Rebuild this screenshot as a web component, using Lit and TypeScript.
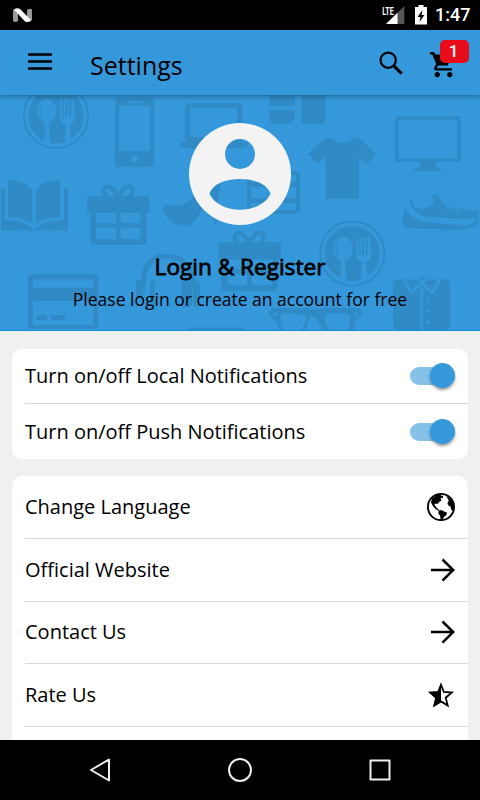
import { LitElement, html, css, svg } from "lit";
import { customElement, property } from "lit/decorators.js";

const arrow = svg`<path d="M4 14H26M15.5 3.5L26.2 14L15.5 24.7" fill="none" stroke="#000" stroke-width="2.5"/>`;

const globe = svg`
  <circle cx="14" cy="14" r="13.1" fill="none" stroke="#000" stroke-width="1.8"/>
  <path d="M5 5.5L9.5 2L14.5 1.2L14 3.2L16.2 2.5L15.8 5L13.4 5.3L14.5 7.5L12 9L10.5 11L8.2 10.6L7.4 12L8.8 13.2L10 15.2L12.5 17.2L11.8 18L8.2 15.8L5.6 12.5L4 9.5Z"/>
  <path d="M11.6 17.8L14.5 17.1L17 18.6L20 19.6L19.3 22.2L17.2 23.8L15.2 27H13.6L13.2 23L11.4 20.5Z"/>
  <path d="M19.2 3L22 4.4L25.8 8.5L27.3 13.5L26.4 18L24.3 17L23.6 13.8L21.6 12.8L20.4 10L21.8 7.6L20.8 5.8Z"/>`;

const star = svg`
  <path d="M14 3.8L16.8 11L24.8 11.6L18.7 16.7L20.7 24.6L14 20.4L7.3 24.6L9.3 16.7L3.2 11.6L11.2 11Z" fill="none" stroke="#000" stroke-width="1.8"/>
  <path d="M14 2.5V21L6.4 25.6L8.2 17L2.2 11.5L10.5 10.8Z"/>`;

const plate = (x: number, y: number) => svg`
  <g transform="translate(${x} ${y})">
    <circle r="32" fill="none" stroke="#2f8ac6" stroke-width="2"/>
    <circle r="27.6"/>
    <g fill="#3498db">
      <ellipse cx="-9.3" cy="-5" rx="9.8" ry="11.7"/>
      <path d="M-11 5H-7.5L-6 27L-12 25Z"/>
      <path d="M4.5 -17L6 -17.5L6.6 2H8V-17H9.7V2H11.5V-17H13.3V2H15L15.6 -17L17.5 -17L19 0Q19 7 13.5 9L15 24L8.5 27L10 9Q4 7 4 1Z"/>
    </g>
    <path d="M-15 -11Q-18 -4 -13.5 2" fill="none" stroke="#2f8ac6" stroke-width="1.2"/>
  </g>`;

const gift = (x: number, y: number) => svg`
  <g transform="translate(${x} ${y})">
    <rect width="62.5" height="17" rx="2"/>
    <path fill-rule="evenodd" d="M3 16H59.5V45Q59.5 49 55.5 49H7Q3 49 3 45ZM9 17V27H29V17ZM33.5 17V27H53.5V17ZM9 31.5V43H29V31.5ZM33.5 31.5V43H53.5V31.5Z"/>
    <path d="M30 0C25 -12 16 -12 16.5 -4Q17 -1 21 1M32 0C37 -12 46 -12 45.5 -4Q45 -1 41 1" fill="none" stroke="#2f8ac6" stroke-width="4"/>
  </g>`;

@customElement("shop-pattern")
class ShopPattern extends LitElement {
  static styles = css`
    :host { display: block; height: 100%; }
    .art { display: block; width: 480px; height: 236px; fill: #2f8ac6; }
  `;
  render() {
    return html`<svg class="art" viewBox="0 95 480 236">
      ${plate(56, 116)} ${plate(352.3, 253.6)} ${gift(87, 196)} ${gift(218.3, 242.3)}
      <path fill-rule="evenodd" d="M119 97.7H150Q154 97.7 154 101.7V163Q154 167 150 167H119Q115 167 115 163V101.7Q115 97.7 119 97.7ZM119 106V150.7H150V106ZM127 101V103H142.3V101ZM131 159A3.6 3.6 0 1 0 138.2 159A3.6 3.6 0 1 0 131 159Z"/>
      <path d="M8 181Q8 179.7 10 179.7Q26 181 32.3 190V224Q27 218.5 8 217ZM60 181Q60 179.7 58 179.7Q42 181 36 190V224Q41 218.5 60 217ZM1 189Q1 188 2.5 188H5V220Q28 221 32.5 229.5H35.5Q40 221 64 220V188H66.5Q68 188 68 189.5V231Q50 229 37 230.5H31Q18 229 1 231Z"/>
      <rect x="187.7" y="105.5" width="52" height="34" rx="1.5" fill="none" stroke="#2f8ac6" stroke-width="5"/>
      <path d="M180 142H248Q247 148.5 241 148.5H187Q181 148.5 180 142ZM269 92H295V105.7H269ZM269 110H295V116Q295 124 287 124H277Q269 124 269 116ZM301.5 92H325.3V121Q325.3 124 322.3 124H304.5Q301.5 124 301.5 121Z"/>
      <path d="M308 154L326 137.8H331Q342.5 148.5 354 137.8H359L376 154.5L366.8 164L359 156.5V199H325.8V156.5L317.5 164Z"/>
      <rect x="396.6" y="117.7" width="62.5" height="42.5" rx="2" fill="none" stroke="#2f8ac6" stroke-width="3.6"/>
      <path d="M420 161H436V167.5H439Q441.5 168 441.5 171H414Q414 168 417 167.5H420Z"/>
      <path fill-rule="evenodd" d="M252 171H295Q300 171 300 176V209Q300 214 295 214H252Q247 214 247 209V176Q247 171 252 171ZM251 175V182H296V175ZM251 187V198H271V187ZM276 187V198H296V187ZM251 203V210H296V203Z"/>
      <path d="M163 210Q164 203 174 205Q184 207 194 196Q206 185 218 170Q224 178 219 192L216 225H214L213 196L200 213Q193 228 181 225Q169 224 163 210Z"/>
      <path d="M405 206Q410 220 425 222L467 226Q479 222 478 215Q480 208 476 211L451 208L442 203Q437 191 432 195L434 203Q431 209 418 209Q412 207 413 201Q409 197 410 204Q414 213 426 217L465 219Q475 217 478 219Q480 223 474 227Q459 232 436 229Q415 229 406 228Q402 225 403 217Z"/>
      <path d="M445 201L448 211M451 203L453 212M457 205L458 213" stroke="#3498db" stroke-width="1.5"/>
      <path fill-rule="evenodd" d="M32 274H94Q98 274 98 278V325Q98 329 94 329H32Q28 329 28 325V278Q28 274 32 274ZM33 279V287.7H93V279ZM33 301V325H93V301Z"/>
      <path d="M37 315H47V320H37ZM51 315H65V320H51Z"/>
      <path d="M143 291V284C144 262 154 256 166 256C181 256 193 265 193 288" fill="none" stroke="#2f8ac6" stroke-width="5"/>
      <rect x="136" y="280" width="7" height="19" rx="3"/><rect x="150" y="281" width="5" height="26" rx="2.5"/>
      <rect x="181" y="281" width="11" height="26" rx="4"/><rect x="193" y="281" width="7" height="26" rx="3"/>
      <path fill-rule="evenodd" d="M272 308H307Q315 311 324 308H358Q362 309 362 314Q358 320 355 321L354 331H323L316 318Q313 316 310 318L305 331H280L275 320Q268 317 269 311ZM281 314Q279 321 284 331H300Q307 324 306 316Q296 312 281 314ZM326 314Q322 321 330 331H347Q352 322 350 315Q337 312 326 314Z"/>
      <circle cx="275" cy="314" r="2" fill="#3498db"/><circle cx="356" cy="314" r="2" fill="#3498db"/>
      <path d="M185 331Q188 327.5 194 327.5H238Q244 328 248 331Z"/>
      <rect x="393" y="279.5" width="57" height="50.5" rx="5"/>
      <path d="M414 277H430L422 287Z"/>
      <path d="M404 280L411 292.5L428 277.5M439.5 280L432.5 292.5L415.5 277.5" fill="none" stroke="#3498db" stroke-width="3"/>
      <path d="M421.8 288V331" stroke="#3498db" stroke-width="3"/>
      <g fill="#3498db"><circle cx="428" cy="301" r="1.7"/><circle cx="428" cy="311.5" r="1.7"/><circle cx="428" cy="322" r="1.7"/></g>
    </svg>`;
  }
}

@customElement("setting-row")
class SettingRow extends LitElement {
  @property() label = "";
  @property() kind = "arrow";
  static styles = css`
    :host { display: block; }
    .row { box-sizing: border-box; height: 100%; display: flex; align-items: center; justify-content: space-between; padding-right: 13px; }
    .label { font: 400 20px/28px "Open Sans", sans-serif; color: #000; white-space: nowrap; }
    .icon { width: 28px; height: 28px; display: block; overflow: visible; }
    .track { width: 45px; height: 18px; position: relative; background: linear-gradient(#85c1e9, #85c1e9) no-repeat 0 0 / 40px 18px; border-radius: 9px; }
    .knob { position: absolute; right: 0; top: -4px; width: 25px; height: 25px; border-radius: 50%; background: #3498db; box-shadow: 0 2px 3px rgba(0,0,0,.4); }
  `;
  render() {
    const icon = this.kind === "globe" ? globe : this.kind === "star" ? star : arrow;
    return html`<div class="row"><span class="label">${this.label}</span>
      ${this.kind === "toggle"
        ? html`<div class="track"><div class="knob"></div></div>`
        : this.kind === "none" ? "" : html`<svg class="icon" viewBox="0 0 28 28">${icon}</svg>`}
    </div>`;
  }
}

@customElement("app-root")
class AppRoot extends LitElement {
  static styles = css`
    :host { display: flex; flex-direction: column; width: 480px; height: 800px; overflow: hidden; background: #f0f0f0; font-family: "Open Sans", sans-serif; color: #000; }
    svg { display: block; }
    .status { flex: none; height: 30px; background: #000; color: #fff; display: flex; align-items: center; padding: 0 10px 0 13px; box-sizing: border-box; }
    .signal { margin-left: auto; }
    .battery { margin-left: 10px; }
    .time { font: 500 18px/30px Roboto, sans-serif; margin-left: 8px; width: 35px; white-space: nowrap; }
    .bar { flex: none; height: 65px; background: #3498db; display: flex; align-items: center; box-sizing: border-box; padding: 0 11px 0 28px; position: relative; z-index: 2; box-shadow: 0 1px 5px rgba(0,0,0,.4); }
    .menu { margin-top: -3px; }
    .title { font-size: 25px; line-height: 34px; margin: 5px auto 0 38px; }
    .search { margin-top: 2px; }
    .cart { position: relative; width: 39px; height: 45px; margin-left: 26px; }
    .cart svg { padding-top: 12px; }
    .badge { position: absolute; left: 10px; top: 0; width: 29px; height: 23px; border-radius: 5px; background: #e90d1b; color: #fff; font: 500 17px/22px Roboto, sans-serif; text-align: center; text-indent: -2px; }
    .hero { flex: none; height: 236px; background: #3498db; position: relative; overflow: hidden; border-bottom: 1px solid #0795e5; box-sizing: border-box; }
    .front { position: absolute; inset: 0; display: flex; flex-direction: column; align-items: center; padding-top: 28px; }
    .name { font-size: 22.6px; line-height: 30px; margin-top: 27px; -webkit-text-stroke: 0.8px #000; white-space: nowrap; }
    .hint { font-size: 17.5px; line-height: 24px; margin-top: 5px; white-space: nowrap; }
    .content { flex: 1; min-height: 0; overflow: hidden; padding: 18px 12px 0; display: flex; flex-direction: column; gap: 17px; }
    .card { flex: none; background: #fff; border-radius: 10px; padding-left: 13px; }
    .card setting-row { box-sizing: border-box; }
    .card setting-row + setting-row { border-top: 1px solid #d9d9d9; }
    .toggles setting-row { height: 54px; }
    .toggles setting-row + setting-row { height: 56px; }
    .links setting-row { height: 62.5px; }
    .links setting-row:first-child { height: 62px; }
    .nav { flex: none; height: 60px; background: #000; }
  `;
  render() {
    return html`
      <div class="status">
        <svg width="19" height="15" viewBox="0 0 19 15"><path d="M0 2Q2 .5 5 1V13Q2 15 0 13ZM14 2Q17 0 19 1.5V12Q17 15 14 13Z" fill="#999"/><path d="M1 1.5Q4 -.5 7 1L18 12Q16 15 12 13.5Z" fill="#fff"/></svg>
        <svg class="signal" width="23" height="20" viewBox="0 0 23 20"><path d="M22.3 1V19H4Z" fill="#555"/><path d="M15.5 7.7V19H4Z" fill="#fff"/><text x=".2" y="9.5" font-family="Roboto" font-weight="700" font-size="11" textLength="11.5" lengthAdjust="spacingAndGlyphs" fill="#fff">LTE</text></svg>
        <svg class="battery" width="12" height="20" viewBox="0 0 12 20"><path d="M3.5 0H8.5V2H12V19.5H0V2H3.5Z" fill="#fff"/><path d="M7.5 5L2.5 12H5.4L4.5 17L9.5 10H6.6Z"/></svg>
        <span class="time">1:47</span>
      </div>
      <div class="bar">
        <svg class="menu" width="24" height="17" viewBox="0 0 24 17"><path d="M0 1.5H24M0 8.5H24M0 15.5H24" stroke="#000" stroke-width="2.3"/></svg>
        <span class="title">Settings</span>
        <svg class="search" width="25" height="25" viewBox="0 0 25 25"><circle cx="9.2" cy="9.2" r="7.6" fill="none" stroke="#000" stroke-width="2.2"/><path d="M14.6 14.6L22.6 22.6" stroke="#000" stroke-width="3"/></svg>
        <div class="cart">
          <svg width="24" height="26" viewBox="0 0 24 26"><path d="M0 0H4L5.3 2.6H23L17.5 13.5H8L6.7 16.2H22V18.6H6Q3.5 18 4.4 15.4L6.2 12L2.3 2.6H0Z"/><circle cx="7.3" cy="22.6" r="2.6"/><circle cx="19.8" cy="22.6" r="2.6"/></svg>
          <span class="badge">1</span>
        </div>
      </div>
      <div class="hero">
        <shop-pattern></shop-pattern>
        <div class="front">
          <svg width="102" height="102" viewBox="0 0 102 102"><path fill="#f3f3f3" fill-rule="evenodd" d="M51 0A51 51 0 1 1 51 102A51 51 0 1 1 51 0ZM51 16A15 15 0 1 0 51 46A15 15 0 1 0 51 16ZM20.5 71C31 92 71 92 81.5 71C76 51 26 51 20.5 71Z"/></svg>
          <div class="name">Login &amp; Register</div>
          <div class="hint">Please login or create an account for free</div>
        </div>
      </div>
      <div class="content">
        <div class="card toggles">
          <setting-row label="Turn on/off Local Notifications" kind="toggle"></setting-row>
          <setting-row label="Turn on/off Push Notifications" kind="toggle"></setting-row>
        </div>
        <div class="card links">
          <setting-row label="Change Language" kind="globe"></setting-row>
          <setting-row label="Official Website"></setting-row>
          <setting-row label="Contact Us"></setting-row>
          <setting-row label="Rate Us" kind="star"></setting-row>
          <setting-row kind="none"></setting-row>
        </div>
      </div>
      <div class="nav">
        <svg width="480" height="60" viewBox="0 0 480 60" fill="none" stroke="#eee" stroke-width="2" stroke-linejoin="round"><path d="M109 19.5V40.5L91 30Z"/><circle cx="240" cy="30" r="11"/><rect x="370.5" y="20.5" width="19" height="19"/></svg>
      </div>`;
  }
}
